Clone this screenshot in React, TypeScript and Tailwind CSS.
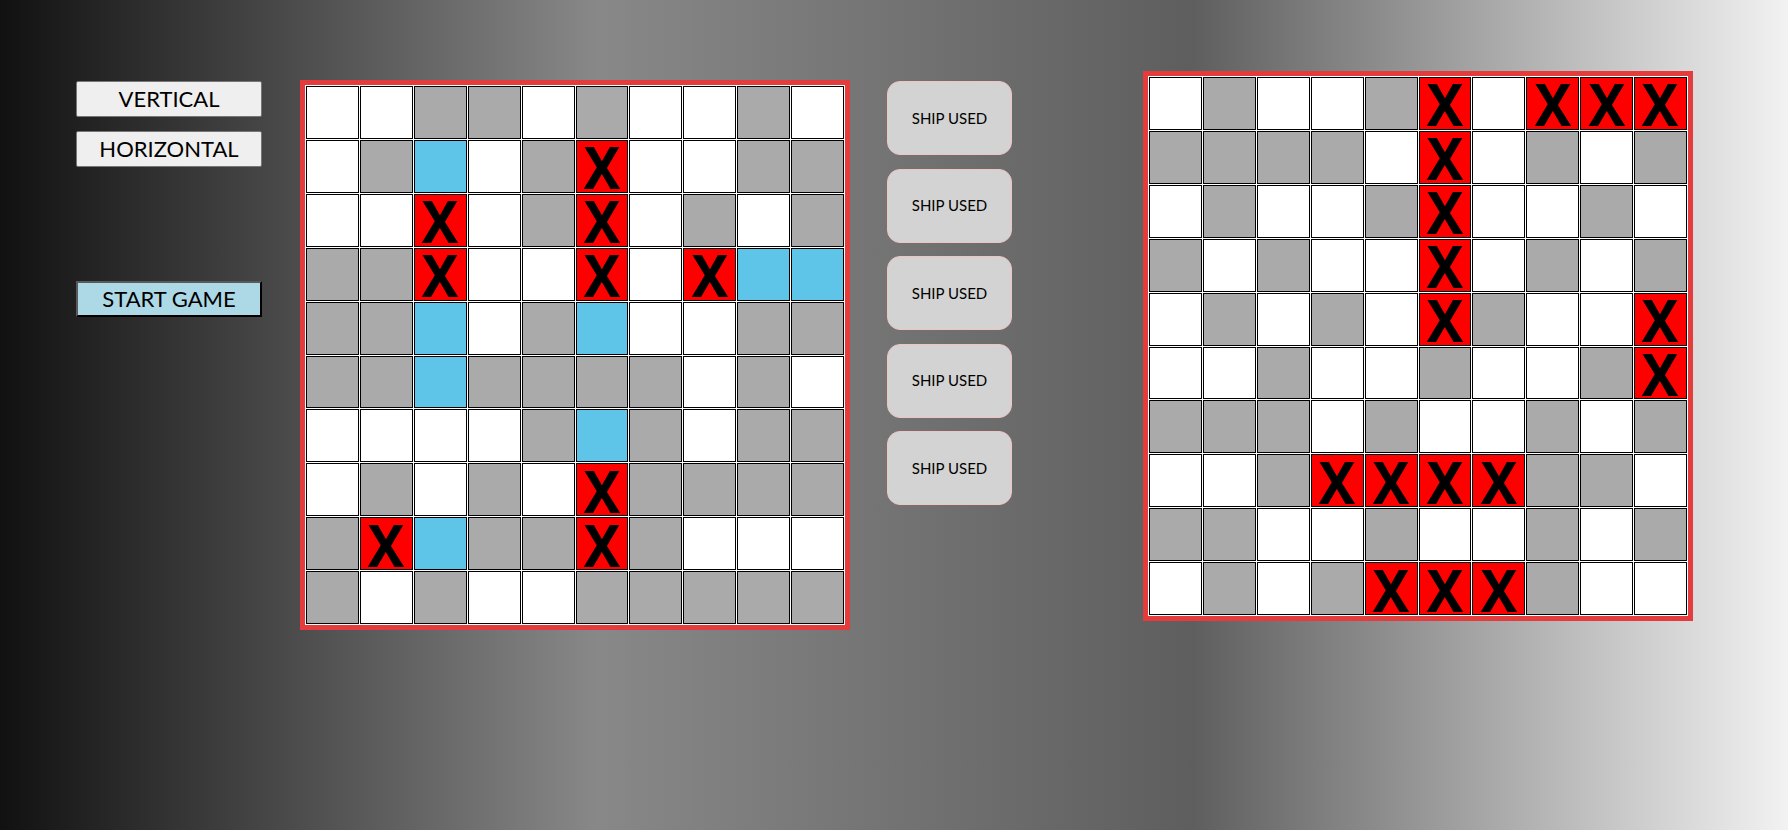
import React from "react";

const LEFT = [
  "WWGGWGWWGW",
  "WGBWGXWWGG",
  "WWXWGXWGWG",
  "GGXWWXWXBB",
  "GGBWGBWWGG",
  "GGBGGGGWGW",
  "WWWWGBGWGG",
  "WGWGWXGGGG",
  "GXBGGXGWWW",
  "GWGWWGGGGG",
];

const RIGHT = [
  "WGWWGXWXXX",
  "GGGGWXWGWG",
  "WGWWGXWWGW",
  "GWGWWXWGWG",
  "WGWGWXGWWX",
  "WWGWWGWWGX",
  "GGGWGWWGWG",
  "WWGXXXXGGW",
  "GGWWGWWGWG",
  "WGWGXXXGWW",
];

function Cell({ t }: { t: string }) {
  const bg =
    t === "G"
      ? "bg-[#aaaaaa]"
      : t === "B"
      ? "bg-[#5ec5e9]"
      : t === "X"
      ? "bg-[#ff0000]"
      : "bg-white";
  return (
    <div className={`${bg} border border-black flex items-center justify-center`}>
      {t === "X" && (
        <span className="text-[60px] leading-[48px] text-black font-['Noto_Sans',sans-serif] font-bold scale-x-[0.92]">
          X
        </span>
      )}
    </div>
  );
}

function Board({ rows, className }: { rows: string[]; className?: string }) {
  return (
    <div
      className={`w-[550px] h-[550px] shrink-0 border-[5px] border-[#e43c3c] bg-white p-px grid grid-cols-10 grid-rows-10 gap-px ${className ?? ""}`}
    >
      {rows.flatMap((r, i) => r.split("").map((t, j) => <Cell key={`${i}-${j}`} t={t} />))}
    </div>
  );
}

export default function App() {
  return (
    <div className="w-full h-[830px] bg-[linear-gradient(to_right,#111111,#888888,#5e5e5e,#f2f2f2)] font-['Lato',sans-serif] text-black overflow-hidden">
      <div className="flex items-start pl-[76px] pt-[71px]">
        <div className="flex flex-col w-[186px] shrink-0 mt-[10px]">
          <button className="h-[36px] bg-[#efefef] border border-[#767676] rounded-[2px] text-[22px] leading-none">
            VERTICAL
          </button>
          <button className="mt-[14px] h-[36px] bg-[#efefef] border border-[#767676] rounded-[2px] text-[22px] leading-none">
            HORIZONTAL
          </button>
          <button className="mt-[114px] h-[36px] bg-[#add8e6] border-2 border-t-[#5a5a5a] border-l-[#5a5a5a] border-r-black border-b-black text-[22px] leading-none">
            START GAME
          </button>
        </div>
        <Board rows={LEFT} className="ml-[38px] mt-[9px]" />
        <div className="flex flex-col gap-[13.5px] w-[125px] shrink-0 ml-[37px] mt-[10px]">
          {[0, 1, 2, 3, 4].map((i) => (
            <button
              key={i}
              className="h-[74px] bg-[#d3d3d3] border border-[#f0c4c4] rounded-[13px] text-[15px] leading-none"
            >
              SHIP USED
            </button>
          ))}
        </div>
        <Board rows={RIGHT} className="ml-[131px]" />
      </div>
    </div>
  );
}
